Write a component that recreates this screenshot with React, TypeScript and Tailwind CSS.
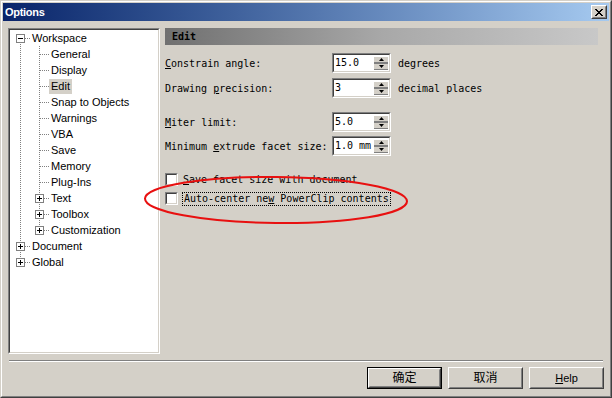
import React from 'react';

type VLine = 'full' | 'top' | 'bottom' | 'none';

const mono = "font-['DejaVu_Sans_Mono','Liberation_Mono',monospace] text-[10px]";
const sans = "font-['Liberation_Sans',Arial,sans-serif] text-[11px]";

const Connector = ({ v, h, box }: { v: VLine; h?: boolean; box?: 'plus' | 'minus' }) => (
  <svg width="19" height="16" className="shrink-0 block" shapeRendering="crispEdges">
    {v !== 'none' && (
      <line
        x1="9.5"
        x2="9.5"
        y1={v === 'bottom' ? 8 : 0}
        y2={v === 'top' ? 9 : 16}
        stroke="#808080"
        strokeDasharray="1 1"
      />
    )}
    {h && <line x1="10" x2="19" y1="8.5" y2="8.5" stroke="#808080" strokeDasharray="1 1" />}
    {box && (
      <g>
        <rect x="5.5" y="4.5" width="8" height="8" fill="#fff" stroke="#808080" />
        <line x1="7" x2="12" y1="8.5" y2="8.5" stroke="#000" />
        {box === 'plus' && <line x1="9.5" x2="9.5" y1="6" y2="11" stroke="#000" />}
      </g>
    )}
  </svg>
);

const TreeRow = ({
  cells,
  label,
  selected,
}: {
  cells: { v: VLine; h?: boolean; box?: 'plus' | 'minus' }[];
  label: string;
  selected?: boolean;
}) => (
  <div className="flex h-[16px] items-center">
    {cells.map((c, i) => (
      <Connector key={i} {...c} />
    ))}
    <span className={`${sans} px-[2px] leading-[15px] text-black ${selected ? 'bg-[#d4d0c8]' : ''}`}>
      {label}
    </span>
  </div>
);

const Sunken = ({ className = '', children }: { className?: string; children?: React.ReactNode }) => (
  <div className={`border border-t-[#808080] border-l-[#808080] border-b-white border-r-white ${className}`}>
    <div className="h-full w-full border border-t-[#404040] border-l-[#404040] border-b-[#d4d0c8] border-r-[#d4d0c8] bg-white">
      {children}
    </div>
  </div>
);

const Arrow = ({ up }: { up?: boolean }) => (
  <svg width="5" height="3" className="block">
    {up ? <polygon points="2.5,0 5,3 0,3" fill="#000" /> : <polygon points="0,0 5,0 2.5,3" fill="#000" />}
  </svg>
);

const SpinBox = ({ value }: { value: string }) => (
  <Sunken className="w-[59px] h-[20px] shrink-0">
    <div className="flex h-full items-center">
      <span className={`${mono} min-w-0 flex-1 whitespace-pre pl-px leading-none text-black`}>{value}</span>
      <div className="mr-px flex h-full w-[14px] shrink-0 flex-col justify-center py-px">
        <div className="flex h-[6px] items-center justify-center border-t border-t-white bg-[#d4d0c8]">
          <Arrow up />
        </div>
        <div className="h-[3px] bg-[#808080]" />
        <div className="flex h-[6px] items-center justify-center border-b border-b-[#808080] bg-[#d4d0c8]">
          <Arrow />
        </div>
      </div>
    </div>
  </Sunken>
);

const Field = ({ pre, u, post, value, unit, className = '' }: { pre: string; u: string; post: string; value: string; unit?: string; className?: string }) => (
  <div className={`flex items-center ${className}`}>
    <span className={`${mono} w-[167px] whitespace-pre text-black`}>
      {pre}
      <span className="underline">{u}</span>
      {post}
    </span>
    <SpinBox value={value} />
    {unit && <span className={`${mono} ml-[7px] text-black`}>{unit}</span>}
  </div>
);

const CheckBox = () => (
  <div className="h-[13px] w-[13px] shrink-0 border border-t-[#808080] border-l-[#808080] border-b-white border-r-white">
    <div className="h-full w-full border border-t-[#404040] border-l-[#404040] border-b-[#d4d0c8] border-r-[#d4d0c8] bg-white" />
  </div>
);

const Button = ({ children, isDefault }: { children: React.ReactNode; isDefault?: boolean }) => (
  <div className={`h-[22px] w-[75px] ${isDefault ? 'border border-black' : ''}`}>
    <div className="h-full w-full border border-t-white border-l-white border-b-[#404040] border-r-[#404040]">
      <div className="flex h-full w-full items-center justify-center border border-transparent border-b-[#808080] border-r-[#808080] bg-[#d4d0c8] font-['Liberation_Sans','Noto_Sans_CJK_SC',sans-serif] text-[12px] text-black">
        {children}
      </div>
    </div>
  </div>
);

export default function App() {
  const full: VLine = 'full';
  return (
    <div className="relative h-[398px] w-[612px] overflow-hidden border border-t-[#d4d0c8] border-l-[#d4d0c8] border-b-[#404040] border-r-[#404040] bg-[#d4d0c8]">
      <div className="flex h-full w-full flex-col border border-t-white border-l-white border-b-[#808080] border-r-[#808080] p-px">
        {/* title bar */}
        <div className="flex h-[18px] shrink-0 items-center justify-between bg-linear-to-r from-[#0a246a] to-[#a6caf0] pl-[2px]">
          <span className="font-['Liberation_Sans',Arial,sans-serif] text-[11px] font-bold tracking-[-0.3px] text-white">
            Options
          </span>
          <div className="mr-[2px] h-[14px] w-[16px] border border-t-white border-l-white border-b-[#404040] border-r-[#404040]">
            <div className="flex h-full w-full items-center justify-center border border-transparent border-b-[#808080] border-r-[#808080] bg-[#d4d0c8]">
              <svg width="8" height="7" shapeRendering="crispEdges">
                <path d="M0 0 L2 0 L4 2.5 L6 0 L8 0 L5 3.5 L8 7 L6 7 L4 4.5 L2 7 L0 7 L3 3.5 Z" fill="#000" />
              </svg>
            </div>
          </div>
        </div>

        {/* body */}
        <div className="flex pl-[5px] pt-[7px]">
          <Sunken className="h-[326px] w-[152px] shrink-0">
            <div className="pl-px">
              <TreeRow cells={[{ v: 'bottom', h: true, box: 'minus' }]} label="Workspace" />
              <TreeRow cells={[{ v: full }, { v: full, h: true }]} label="General" />
              <TreeRow cells={[{ v: full }, { v: full, h: true }]} label="Display" />
              <TreeRow cells={[{ v: full }, { v: full, h: true }]} label="Edit" selected />
              <TreeRow cells={[{ v: full }, { v: full, h: true }]} label="Snap to Objects" />
              <TreeRow cells={[{ v: full }, { v: full, h: true }]} label="Warnings" />
              <TreeRow cells={[{ v: full }, { v: full, h: true }]} label="VBA" />
              <TreeRow cells={[{ v: full }, { v: full, h: true }]} label="Save" />
              <TreeRow cells={[{ v: full }, { v: full, h: true }]} label="Memory" />
              <TreeRow cells={[{ v: full }, { v: full, h: true }]} label="Plug-Ins" />
              <TreeRow cells={[{ v: full }, { v: full, h: true, box: 'plus' }]} label="Text" />
              <TreeRow cells={[{ v: full }, { v: full, h: true, box: 'plus' }]} label="Toolbox" />
              <TreeRow cells={[{ v: full }, { v: 'top', h: true, box: 'plus' }]} label="Customization" />
              <TreeRow cells={[{ v: full, h: true, box: 'plus' }]} label="Document" />
              <TreeRow cells={[{ v: 'top', h: true, box: 'plus' }]} label="Global" />
            </div>
          </Sunken>

          <div className="ml-[5px] flex w-[433px] flex-col">
            <div className="flex h-[17px] items-center bg-linear-to-r from-[#707070] via-[#a8a8a8] to-[#c8c8c8] pl-[7px]">
              <span className={`${mono} font-bold text-black`}>Edit</span>
            </div>
            <Field className="mt-[8px]" pre="" u="C" post="onstrain angle:" value="15.0" unit="degrees" />
            <Field className="mt-[5px]" pre="Drawing " u="p" post="recision:" value="3" unit="decimal places" />
            <Field className="mt-[14px]" pre="" u="M" post="iter limit:" value="5.0" />
            <Field className="mt-[4px]" pre="Minimum " u="e" post="xtrude facet size:" value="1.0 mm" />

            <div className="mt-[17px] flex h-[13px] items-center gap-[4px]">
              <CheckBox />
              <span className={`${mono} whitespace-pre px-px text-black`}>
                <span className="underline">S</span>ave facet size with document
              </span>
            </div>
            <div className="mt-[6px] flex h-[13px] items-center gap-[4px]">
              <CheckBox />
              <span className={`${mono} whitespace-pre border border-dotted border-black px-px leading-[12px] text-black`}>
                Auto-center ne<span className="underline">w</span> PowerClip contents
              </span>
            </div>
          </div>
        </div>

        {/* separator */}
        <div className="ml-[6px] mt-[6px] w-[594px] border-t border-t-[#808080] border-b border-b-white" />

        {/* buttons */}
        <div className="mt-[5px] flex justify-end gap-[6px] pr-[5px]">
          <Button isDefault>确定</Button>
          <Button>取消</Button>
          <Button>
            <span className="text-[11px]">
              <span className="underline">H</span>elp
            </span>
          </Button>
        </div>
      </div>

      {/* red annotation ellipse */}
      <svg className="pointer-events-none absolute left-0 top-0" width="612" height="398">
        <ellipse cx="275" cy="199" rx="131" ry="23" fill="none" stroke="#e81010" strokeWidth="2" transform="rotate(0.6 275 199)" />
      </svg>
    </div>
  );
}
